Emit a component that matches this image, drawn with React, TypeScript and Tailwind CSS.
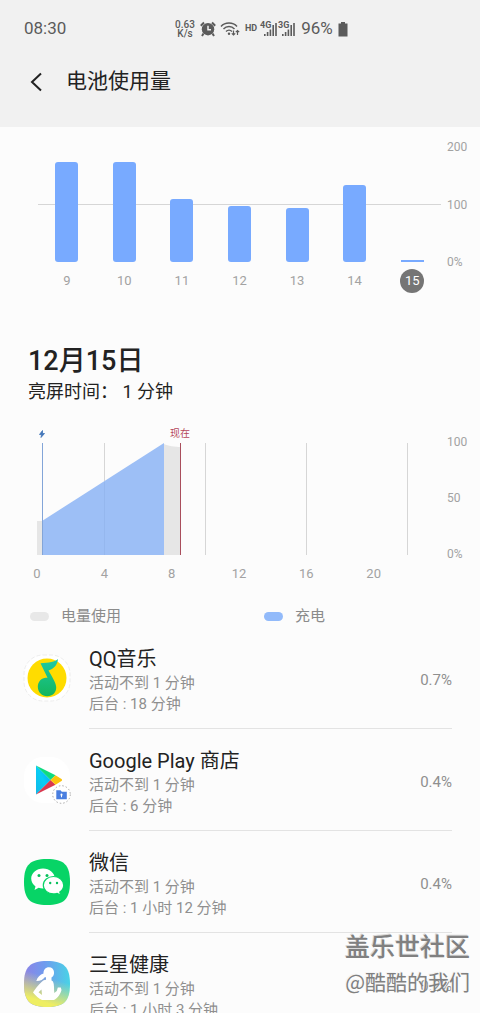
import type { ReactNode } from "react";

const days = [
  { day: 9, height: 100 },
  { day: 10, height: 100 },
  { day: 11, height: 63 },
  { day: 12, height: 56 },
  { day: 13, height: 54 },
  { day: 14, height: 77 },
  { day: 15, height: 2 },
];

const QQMusicIcon = () => (
  <svg viewBox="0 0 48 48" className="size-12">
    <rect x="1" y="1" width="46" height="46" rx="19" fill="#fff" stroke="#e9e9e9" strokeWidth="0.8" strokeDasharray="4 2" />
    <circle cx="24" cy="24" r="19.5" fill="#ffdc00" />
    <defs>
      <linearGradient id="note" x1="0" y1="0" x2="0" y2="1">
        <stop offset="0" stopColor="#1fc9a6" />
        <stop offset="1" stopColor="#14b65c" />
      </linearGradient>
    </defs>
    <path
      d="M35 5C32 8 26 8.500 17.500 9.300L24.500 23.800C19.500 22.800 14.800 26.800 14.800 32.800C14.800 38.400 19 42.300 24.200 42.300C29.600 42.300 33.500 38.300 33.200 33C33 29.500 31 26 25.500 16.500C30.500 15 34.500 11 35 5Z"
      fill="url(#note)"
    />
  </svg>
);

const PlayIcon = () => (
  <svg viewBox="0 0 48 48" className="size-12">
    <rect x="1" y="1" width="46" height="46" rx="19" fill="#fff" />
    <defs>
      <linearGradient id="playBlue" x1="1" y1="0" x2="0" y2="1">
        <stop offset="0" stopColor="#00a0ff" />
        <stop offset="0.5" stopColor="#08cdf5" />
        <stop offset="1" stopColor="#12b8e8" />
      </linearGradient>
    </defs>
    <path d="M13 9.500V38.500L27.500 24Z" fill="url(#playBlue)" />
    <path d="M13 9.500L32.500 19.300L27.500 24Z" fill="#0fdb80" />
    <path d="M13 38.500L32.500 28.700L27.500 24Z" fill="#d9384f" />
    <path d="M32.500 19.300L38.500 23C39.300 23.600 39.300 24.400 38.500 25L32.500 28.700L27.500 24Z" fill="#fcc30c" />
    <circle cx="38.500" cy="38.500" r="8.800" fill="#fff" stroke="#888" strokeWidth="0.7" strokeDasharray="1.500 2" />
    <path d="M33.300 34.300H37.500L38.800 35.800H43.800V43.200H33.300Z" fill="#4a7fe0" />
    <path d="M38.500 37.500a1.200 1.200 0 0 1 .5 2.200v1.600h-1v-1.600a1.200 1.200 0 0 1 .5-2.200Z" fill="#fff" />
  </svg>
);

const WeChatIcon = () => (
  <svg viewBox="0 0 48 48" className="size-12">
    <path d="M24 1C41 1 47 7 47 24S41 47 24 47S1 41 1 24S7 1 24 1Z" fill="#07d466" />
    <path d="M20 10.500C13.500 10.500 8.200 15 8.200 20.600C8.200 23.800 9.900 26.500 12.500 28.400L11.500 32L15.600 29.800C17 30.300 18.500 30.500 20 30.500C26.500 30.500 31.800 26 31.800 20.500C31.800 15 26.500 10.500 20 10.500Z" fill="#fff" />
    <path d="M30.500 18.500C24.900 18.500 20.300 22.400 20.300 27.200S24.900 35.900 30.500 35.900C31.800 35.900 33 35.700 34.200 35.300L37.600 37.200L36.800 34C39.200 32.400 40.700 30 40.700 27.200C40.700 22.400 36.100 18.500 30.500 18.500Z" fill="#fff" stroke="#07d466" strokeWidth="1.200" />
    <g fill="#07c05c">
      <circle cx="16" cy="17.500" r="1.500" />
      <circle cx="24" cy="17.500" r="1.500" />
      <circle cx="27.200" cy="25" r="1.200" />
      <circle cx="34" cy="25" r="1.200" />
    </g>
  </svg>
);

const HealthIcon = () => (
  <svg viewBox="0 0 48 48" className="size-12">
    <defs>
      <linearGradient id="healthBase" x1="0" y1="0" x2="1" y2="0">
        <stop offset="0" stopColor="#8d83e6" />
        <stop offset="0.45" stopColor="#6f9bee" />
        <stop offset="1" stopColor="#48d3e6" />
      </linearGradient>
      <linearGradient id="healthGlow" x1="0.6" y1="0.2" x2="0.35" y2="1">
        <stop offset="0.2" stopColor="#e8ec6a" stopOpacity="0" />
        <stop offset="0.85" stopColor="#eeee62" />
      </linearGradient>
    </defs>
    <path d="M24 1C41 1 47 7 47 24S41 47 24 47S1 41 1 24S7 1 24 1Z" fill="url(#healthBase)" />
    <path d="M24 1C41 1 47 7 47 24S41 47 24 47S1 41 1 24S7 1 24 1Z" fill="url(#healthGlow)" />
    <path d="M26 7.200C22.500 7.200 20.300 9.800 20.500 13.500C17 14.500 14.500 17 13.300 21C17 21.200 20.500 19.500 22 17L23 17.500V21H28.500V17.500C30.500 16.500 31.200 14.500 31 12C30.800 9 28.800 7.200 26 7.200Z" fill="#fff" />
    <path
      d="M20 20.800C22 19.300 28 19.300 30 21.500C31.500 24.500 30.800 29.500 31.300 33L33.800 31L34.800 27.500H37.800L38.500 30C38 32 37 34 36 35.500C34.500 37.500 32.500 39.300 31 40H19C16 38.500 12.500 35.800 10 32.500C13 28 17 23 20 20.800ZM18.500 29.500L15.500 32.300L19 35Z"
      fill="#fff"
      fillRule="evenodd"
    />
  </svg>
);

type App = {
  name: string;
  background: string;
  percent: string;
  icon: ReactNode;
};

const apps: App[] = [
  { name: "QQ音乐", background: "后台 : 18 分钟", percent: "0.7%", icon: <QQMusicIcon /> },
  { name: "Google Play 商店", background: "后台 : 6 分钟", percent: "0.4%", icon: <PlayIcon /> },
  { name: "微信", background: "后台 : 1 小时 12 分钟", percent: "0.4%", icon: <WeChatIcon /> },
  { name: "三星健康", background: "后台 : 1 小时 3 分钟", percent: "0.2%", icon: <HealthIcon /> },
];

const Signal = ({ label }: { label: string }) => (
  <svg viewBox="0 0 17 16" className="h-4 w-[17px] overflow-visible" fill="#5b5b5b">
    <text x="-1" y="7" fontSize="9" fontWeight="700">{label}</text>
    <path d="M3 13h1.600v2H3zM5.800 11h1.600v4H5.800zM8.600 8.500h1.600V15H8.600zM11.400 4h1.600v11h-1.600zM14.200 2h1.600v13h-1.600z" />
  </svg>
);

const StatusBar = () => (
  <div className="flex h-[58px] items-center pl-6 text-[#5b5b5b]">
    <span className="w-[151px] text-[17px]">08:30</span>
    <div className="w-5 text-center text-[10px] leading-[9px] font-medium">
      0.63
      <br />
      K/s
    </div>
    <svg viewBox="0 0 16 16" className="ml-[5px] size-4" fill="#5b5b5b">
      <circle cx="8" cy="8.200" r="6.200" />
      <path d="M.8 4.800L4 1.500M15.200 4.800L12 1.500M3.500 12.500L2 15M12.500 12.500L14 15" stroke="#5b5b5b" strokeWidth="2" />
      <path d="M8 4.800V8.700H11" stroke="#f1f1f1" strokeWidth="1.500" fill="none" />
    </svg>
    <svg viewBox="0 0 20 16" className="ml-1 h-4 w-5" fill="none" stroke="#5b5b5b" strokeWidth="1.400">
      <path d="M1 5.500C5 .8 13 .8 17 5.500M3.500 8C6.500 4.700 11.500 4.700 14.500 8M6 10.500C7.800 8.700 10.200 8.700 12 10.500" />
      <circle cx="9" cy="12.700" r="1.200" fill="#5b5b5b" stroke="none" />
      <path d="M13.500 9.500V14M11.800 12.300L13.500 14L15.200 12.300M17.500 14V9.500M15.800 11.200L17.500 9.500L19.200 11.200" strokeWidth="1.200" />
    </svg>
    <span className="ml-[5px] text-[9px] font-bold">HD</span>
    <div className="ml-1 flex gap-px">
      <Signal label="4G" />
      <Signal label="3G" />
    </div>
    <span className="ml-[5px] text-[17px]">96%</span>
    <svg viewBox="0 0 10 15" className="ml-[5px] h-[15px] w-2.5" fill="#5b5b5b">
      <path d="M3 0H7V1.500H9.500V14.500H.5V1.500H3Z" />
    </svg>
  </div>
);

const DailyChart = () => (
  <section className="flex pt-[19px] pl-[38px] text-[12px] text-[#a2a2a2]">
    <div className="flex-1">
      <div className="grid h-[116px]">
        <div className="col-start-1 row-start-1 mb-[57px] self-end border-t border-[#d6d6d6]" />
        <div className="col-start-1 row-start-1 grid grid-cols-7 items-end justify-items-center">
          {days.map(({ day, height }) => (
            <div
              key={day}
              className={`w-[23px] bg-[#78aaff] ${height > 4 ? "rounded-[3px]" : ""}`}
              style={{ height }}
            />
          ))}
        </div>
      </div>
      <div className="mt-[7px] grid grid-cols-7 justify-items-center text-[13px] leading-6">
        {days.map(({ day }) => (
          <span
            key={day}
            className={day === 15 ? "w-6 rounded-full bg-[#757575] text-center text-white" : ""}
          >
            {day}
          </span>
        ))}
      </div>
    </div>
    <div className="-mt-[7px] flex h-[131px] w-[39px] flex-col justify-between pl-1.5 leading-4">
      <span>200</span>
      <span>100</span>
      <span>0%</span>
    </div>
  </section>
);

const HourChart = () => (
  <section className="flex pl-[37px] text-[12px] text-[#a2a2a2]">
    <div className="flex-1">
      <svg viewBox="0 0 404 128" className="w-full overflow-visible">
        <path d="M67.500 16V128M168.500 16V128M269.500 16V128M370.500 16V128" stroke="#d6d6d6" />
        <path d="M0 94H6V128H0Z" fill="#e6e6e6" />
        <path d="M127 17C131 19 138 20 144 20V128H127Z" fill="#e6e6e6" />
        <path d="M5 94L127 16V128H5Z" fill="#9dbff6" />
        <path d="M67.500 55V128" stroke="#8fb2ea" strokeOpacity="0.6" />
        <path d="M5.500 16V128" stroke="#83a5d8" />
        <path d="M143.500 16V128" stroke="#a94e5c" />
        <path d="M5.500 3.500L2.500 7.500H4.500L4 10.500L7.500 6.500H5.500Z" fill="#3f74b8" stroke="#3f74b8" strokeWidth="0.8" />
        <text x="143" y="10" fontSize="10" textAnchor="middle" fill="#b5485a">现在</text>
      </svg>
      <div className="mt-2.5 grid grid-cols-6 text-[13px] leading-[18px]">
        {[0, 4, 8, 12, 16, 20].map((hour) => (
          <span key={hour} className="flex w-0 justify-center">{hour}</span>
        ))}
      </div>
    </div>
    <div className="mt-[7px] flex h-32 w-[39px] flex-col justify-between pl-1.5 leading-4">
      <span>100</span>
      <span>50</span>
      <span>0%</span>
    </div>
  </section>
);

const BatteryUsage = () => {
  return (
    <main className="relative h-screen overflow-hidden bg-[#fcfcfc] font-['Roboto','Noto_Sans_CJK_SC',sans-serif] text-[#222]" lang="zh-CN">
      <header className="h-[127px] bg-[#f1f1f1]">
        <StatusBar />
        <div className="flex h-12 items-center pl-[30px]">
          <button type="button" aria-label="返回">
            <svg viewBox="0 0 12 20" className="h-5 w-3" fill="none" stroke="#222" strokeWidth="2">
              <path d="M11 1.500L2 10L11 18.500" />
            </svg>
          </button>
          <h1 className="ml-6 text-[21px]">电池使用量</h1>
        </div>
      </header>

      <DailyChart />

      <section className="mt-[50px] pl-7">
        <h2 className="text-[27px] leading-9 font-medium">12月15日</h2>
        <p className="text-[18px] leading-[26px]">亮屏时间： 1 分钟</p>
      </section>

      <div className="mt-[22px]">
        <HourChart />
      </div>

      <div className="mt-[22px] grid grid-cols-2 gap-x-[18px] pl-[30px] text-[15px] leading-[22px] text-[#8b8b8b]">
        <div className="flex items-center gap-3">
          <span className="h-[9px] w-[19px] rounded-full bg-[#e8e8e8]" />
          电量使用
        </div>
        <div className="flex items-center gap-3">
          <span className="h-[9px] w-[19px] rounded-full bg-[#92bafa]" />
          充电
        </div>
      </div>

      <ul>
        {apps.map(({ name, background, percent, icon }) => (
          <li key={name} className="flex pl-[23px]">
            <div className="flex w-[66px] items-center">{icon}</div>
            <div className="mr-7 flex flex-1 items-center justify-between border-b border-[#e3e3e3] pt-[18px] pb-[13px]">
              <div className="text-[15px] leading-[21px] text-[#8f8f8f]">
                <h3 className="text-[20px] leading-7 text-[#222]">{name}</h3>
                <p>活动不到 1 分钟</p>
                <p>{background}</p>
              </div>
              <span className="text-[15px] text-[#8f8f8f]">{percent}</span>
            </div>
          </li>
        ))}
      </ul>

      <div className="absolute right-2.5 bottom-4 text-right text-[#808080]">
        <p className="text-[25px] leading-[34px] font-medium [text-shadow:-1px_-1px_0_#d8d8d8]">盖乐世社区</p>
        <p className="font-['Noto_Sans_CJK_SC',sans-serif] text-[21px] leading-8 [text-shadow:-1px_-1px_0_#f4f4f4]">@酷酷的我们</p>
      </div>
    </main>
  );
};

export default BatteryUsage;
